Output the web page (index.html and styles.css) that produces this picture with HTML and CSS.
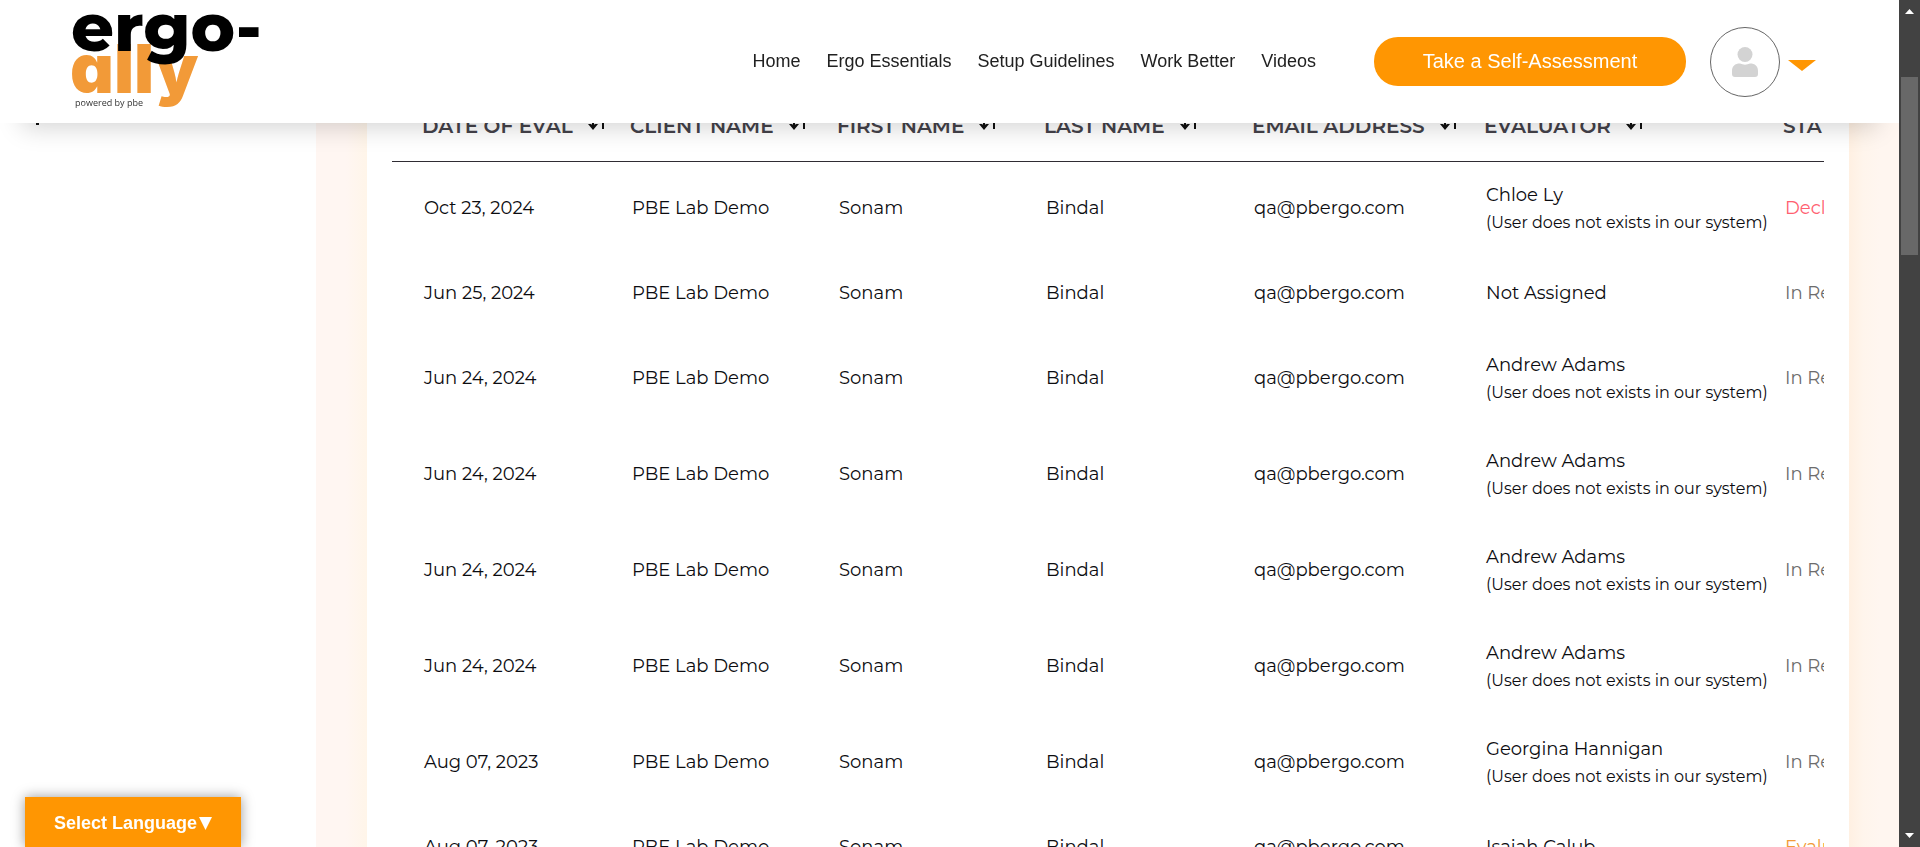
FILE: index.html
```html
<!DOCTYPE html>
<html lang="en">
<head>
<meta charset="utf-8">
<title>ergo-ally</title>
<link rel="stylesheet" href="styles.css">
</head>
<body>
<svg class="defs" aria-hidden="true">
  <symbol id="sort" viewBox="0 0 20 22">
    <path d="M5 1v12M15 14V4" fill="none" stroke="currentColor" stroke-width="2"/>
    <path d="M0 9h2.500L5 10l2.500-1H10L5 15zM10 6h2.500L15 5l2.500 1H20L15 0z" fill="currentColor"/>
  </symbol>
</svg>
<header class="topbar">
  <a class="logo" href="#" aria-label="ergo-ally, powered by pbe">
    <svg class="logo-art" viewBox="0 0 200 112">
      <text class="logo-ally" x="-2" y="87">ally</text>
      <text class="logo-ergo" x="-1" y="45">ergo-</text>
      <text class="logo-tag" x="3" y="100">powered by pbe</text>
    </svg>
  </a>
  <nav class="nav">
    <a href="#">Home</a>
    <a href="#">Ergo Essentials</a>
    <a href="#">Setup Guidelines</a>
    <a href="#">Work Better</a>
    <a href="#">Videos</a>
  </nav>
  <button class="cta" type="button">Take a Self-Assessment</button>
  <button class="account" type="button" aria-label="Account">
    <span class="avatar">
      <svg width="26" height="30" viewBox="0 0 26 30"><circle cx="13" cy="7.500" r="7.500"/><path d="M0 27V24C0 19 3 16.500 8 16.500C11 18 15 18 18 16.500C23 16.500 26 19 26 24V27Q26 30 23 30H3Q0 30 0 27Z"/></svg>
    </span>
    <svg class="caret" width="28" height="11" viewBox="0 0 28 11"><path d="M0 0H28L14 11Z"/></svg>
  </button>
</header>

<div class="page">
  <aside class="side"><span class="side-mark"></span></aside>
  <main class="band">
    <section class="card">
      <div class="table-wrap">
        <table class="evals">
          <colgroup><col class="c-date"><col class="c-client"><col class="c-first"><col class="c-last"><col class="c-mail"><col class="c-eval"><col class="c-status"></colgroup>
          <thead>
            <tr>
              <th scope="col"><button type="button">DATE OF EVAL<svg><use href="#sort"/></svg></button></th>
              <th scope="col"><button type="button">CLIENT NAME<svg><use href="#sort"/></svg></button></th>
              <th scope="col"><button type="button">FIRST NAME<svg><use href="#sort"/></svg></button></th>
              <th scope="col"><button type="button">LAST NAME<svg><use href="#sort"/></svg></button></th>
              <th scope="col"><button type="button">EMAIL ADDRESS<svg><use href="#sort"/></svg></button></th>
              <th scope="col"><button type="button">EVALUATOR<svg><use href="#sort"/></svg></button></th>
              <th scope="col"><button type="button">STATUS</button></th>
            </tr>
          </thead>
          <tbody>
            <tr><td>Oct 23, 2024</td><td>PBE Lab Demo</td><td>Sonam</td><td>Bindal</td><td>qa@pbergo.com</td><td>Chloe Ly<small>(User does not exists in our system)</small></td><td class="declined">Declined</td></tr>
            <tr><td>Jun 25, 2024</td><td>PBE Lab Demo</td><td>Sonam</td><td>Bindal</td><td>qa@pbergo.com</td><td>Not Assigned</td><td class="review">In Review</td></tr>
            <tr><td>Jun 24, 2024</td><td>PBE Lab Demo</td><td>Sonam</td><td>Bindal</td><td>qa@pbergo.com</td><td>Andrew Adams<small>(User does not exists in our system)</small></td><td class="review">In Review</td></tr>
            <tr><td>Jun 24, 2024</td><td>PBE Lab Demo</td><td>Sonam</td><td>Bindal</td><td>qa@pbergo.com</td><td>Andrew Adams<small>(User does not exists in our system)</small></td><td class="review">In Review</td></tr>
            <tr><td>Jun 24, 2024</td><td>PBE Lab Demo</td><td>Sonam</td><td>Bindal</td><td>qa@pbergo.com</td><td>Andrew Adams<small>(User does not exists in our system)</small></td><td class="review">In Review</td></tr>
            <tr><td>Jun 24, 2024</td><td>PBE Lab Demo</td><td>Sonam</td><td>Bindal</td><td>qa@pbergo.com</td><td>Andrew Adams<small>(User does not exists in our system)</small></td><td class="review">In Review</td></tr>
            <tr><td>Aug 07, 2023</td><td>PBE Lab Demo</td><td>Sonam</td><td>Bindal</td><td>qa@pbergo.com</td><td>Georgina Hannigan<small>(User does not exists in our system)</small></td><td class="review">In Review</td></tr>
            <tr><td>Aug 07, 2023</td><td>PBE Lab Demo</td><td>Sonam</td><td>Bindal</td><td>qa@pbergo.com</td><td>Isaiah Calub</td><td class="evaluated">Evaluated</td></tr>
          </tbody>
        </table>
      </div>
    </section>
  </main>
</div>

<button class="language" type="button">Select Language<svg width="13" height="13" viewBox="0 0 13 13"><path d="M0 0H13L6.500 13Z"/></svg></button>

<div class="scrollbar" aria-hidden="true">
  <svg width="9" height="5" viewBox="0 0 9 5"><path d="M0 5L4.500 0L9 5Z"/></svg>
  <div class="track"><div class="thumb"></div></div>
  <svg width="9" height="5" viewBox="0 0 9 5"><path d="M0 0L4.500 5L9 0Z"/></svg>
</div>
</body>
</html>
```
FILE: styles.css
```css
* { box-sizing: border-box; }

body {
  margin: 0;
  height: 100vh;
  overflow: hidden;
  background: #fff;
  color: #0c0c10;
  font-family: Montserrat, Inter, sans-serif;
  font-size: 18px;
}

button {
  margin: 0;
  padding: 0;
  border: 0;
  background: none;
  color: inherit;
  font: inherit;
}

.defs { position: absolute; width: 0; height: 0; }

/* Fixed header */
.topbar {
  position: fixed;
  inset: 0 21px auto 0;
  z-index: 2;
  display: flex;
  align-items: center;
  height: 123px;
  padding: 0 83px 0 72px;
  background: #fff;
  box-shadow: 0 26px 26px -22px rgba(0, 0, 0, 0.18);
  font-family: "Liberation Sans", Arial, sans-serif;
}

.logo { margin-right: auto; }
.logo-art { display: block; width: 200px; height: 112px; overflow: visible; }
.logo-ergo { font-family: Montserrat, sans-serif; font-weight: 800; font-size: 67px; fill: #000; }
.logo-ally { font-family: Inter, sans-serif; font-weight: 900; font-feature-settings: "cv11"; font-size: 68px; fill: #f29a38; }
.logo-tag { font-family: "Open Sans", sans-serif; font-size: 9px; fill: #333; }

.nav { display: flex; gap: 26px; margin-right: 58px; }
.nav a { color: #212121; font-size: 18px; text-decoration: none; white-space: nowrap; }

.cta {
  width: 312px;
  height: 49px;
  margin-right: 24px;
  border-radius: 24px;
  background: #ff9602;
  color: #fff;
  font-size: 20px;
}

.account { display: flex; align-items: center; gap: 8px; }
.avatar {
  display: grid;
  place-items: center;
  width: 70px;
  height: 70px;
  border: 1px solid #666;
  border-radius: 50%;
}
.avatar svg { fill: #d3d3d3; }
.caret { margin-top: 8px; fill: #ff9602; }

/* Page body */
.page { display: flex; min-height: 100vh; padding-right: 21px; }
.side { flex: 0 0 316px; padding: 122px 0 0 36px; }
.side-mark { display: block; width: 3px; height: 3px; background: #111; }
.band {
  flex: 1;
  min-width: 0;
  padding: 0 50px 0 51px;
  background: linear-gradient(to right, #fff6f2 30px, #fff5e9 51px, #fff0e2 calc(100% - 50px), #fff5ec calc(100% - 36px), #fff6f0 calc(100% - 18px));
}
.card { min-height: 100%; padding: 92px 25px 0; background: #fff; }
.table-wrap { overflow: hidden; }

.evals { width: 1531px; table-layout: fixed; border-collapse: collapse; }
.c-date { width: 208px; }
.c-client, .c-first { width: 207px; }
.c-last { width: 208px; }
.c-mail { width: 232px; }
.c-eval { width: 299px; }
.c-status { width: 170px; }

.evals th {
  height: 69px;
  padding: 0 0 0 30px;
  border-bottom: 1px solid #2f2c33;
  color: #44424a;
  font-weight: 600;
  text-align: left;
}
.evals th button { display: flex; align-items: center; gap: 15px; font-size: 20px; line-height: 24px; white-space: nowrap; }
.evals th svg { width: 20px; height: 22px; color: #111; }

.evals td {
  height: 74px;
  padding: 20px 0 22px 32px;
  line-height: 27px;
  white-space: nowrap;
}
.evals small { display: block; font-size: 16px; }
.evals .declined { color: #ff6070; }
.evals .review { color: #6c6c6c; }
.evals .evaluated { color: #f29a38; }

/* Language picker */
.language {
  position: fixed;
  left: 25px;
  bottom: 0;
  z-index: 2;
  display: flex;
  align-items: center;
  gap: 2px;
  height: 50px;
  padding: 2px 29px 0;
  background: #ff9602;
  box-shadow: 0 0 12px rgba(0, 0, 0, 0.4);
  color: #fff;
  font: bold 18px "Liberation Sans", Arial, sans-serif;
}
.language svg { fill: #fff; }

/* Window scrollbar */
.scrollbar {
  position: fixed;
  inset: 0 0 0 auto;
  z-index: 3;
  display: flex;
  flex-direction: column;
  align-items: center;
  width: 21px;
  padding: 9px 0;
  background: #424242;
}
.scrollbar svg { fill: #fff; }
.track { flex: 1; padding-top: 63px; }
.thumb { width: 17px; height: 178px; background: #686868; }
```
